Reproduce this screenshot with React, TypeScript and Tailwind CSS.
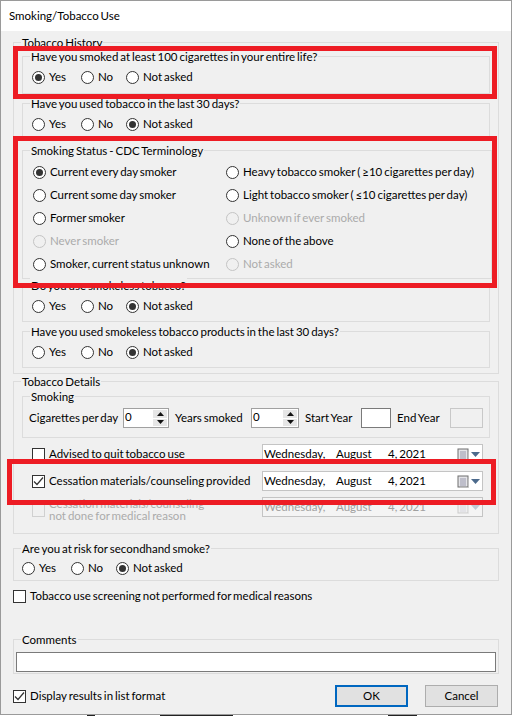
const Radio = ({ label, checked = false, disabled = false }: { label: string; checked?: boolean; disabled?: boolean }) => (
  <div className={`flex items-center gap-[4px] h-[16px] ${disabled ? "text-[#ababab]" : "text-black"}`}>
    <span className={`w-[13px] h-[13px] rounded-full border flex items-center justify-center shrink-0 ${disabled ? "border-[#c4c4c4]" : "border-[#333333] bg-white"}`}>
      {checked && <span className="w-[7px] h-[7px] rounded-full bg-[#333333]" />}
    </span>
    <span className="whitespace-nowrap">{label}</span>
  </div>
);

const Checkbox = ({ checked = false, disabled = false }: { checked?: boolean; disabled?: boolean }) => (
  <span className={`w-[13px] h-[13px] border flex items-center justify-center shrink-0 ${disabled ? "border-[#d0d0d0] bg-[#f0f0f0]" : "border-[#333333] bg-white"}`}>
    {checked && (
      <svg width="11" height="11" viewBox="0 0 11 11" fill="none" stroke="#333333" strokeWidth="1.2">
        <path d="M1 5.5 L4 8.5 L10 1.5" />
      </svg>
    )}
  </span>
);

const Group = ({ title, className, children }: { title: string; className: string; children?: React.ReactNode }) => (
  <div className={`relative border border-[#dcdcdc] ${className}`}>
    <span className="absolute -top-[8px] left-[7px] bg-[#f0f0f0] px-[1px] leading-[16px] whitespace-nowrap text-black">{title}</span>
    {children}
  </div>
);

// the Yes / No / Not asked row used by most of the questions
const YesNo = ({ title, selected, className }: { title: string; selected: string; className: string }) => (
  <Group title={title} className={`w-[468px] ${className}`}>
    <div className="flex pt-[12px] pl-[9px]">
      <div className="w-[49px]"><Radio label="Yes" checked={selected === "Yes"} /></div>
      <div className="w-[45px]"><Radio label="No" checked={selected === "No"} /></div>
      <Radio label="Not asked" checked={selected === "Not asked"} />
    </div>
  </Group>
);

const Spinner = ({ width }: { width: string }) => (
  <div className={`h-[20px] border border-[#a0a0a0] bg-white flex shrink-0 ${width}`}>
    <span className="flex-1 pl-[1px] leading-[16px]">0</span>
    <div className="w-[14px] my-[1px] mr-[1px] flex flex-col gap-[1px]">
      <div className="flex-1 bg-[#e6e6e6] flex items-center justify-center">
        <svg width="7" height="4" viewBox="0 0 7 4"><path d="M3.5 0 L7 4 H0 Z" fill="#111111" /></svg>
      </div>
      <div className="flex-1 bg-[#e6e6e6] flex items-center justify-center">
        <svg width="7" height="4" viewBox="0 0 7 4"><path d="M0 0 H7 L3.5 4 Z" fill="#111111" /></svg>
      </div>
    </div>
  </div>
);

const DatePicker = ({ disabled = false }: { disabled?: boolean }) => (
  <div className={`w-[221px] h-[20px] border border-[#c4c4c4] flex items-center pl-[1px] shrink-0 ${disabled ? "bg-[#f4f4f4] text-[#a0a0a0]" : "bg-white text-black"}`}>
    <span className="w-[72px]">Wednesday,</span>
    <span className="w-[51px]">August</span>
    <span className="w-[70px] pl-[1px]">4, 2021</span>
    <svg width="12" height="13" viewBox="0 0 12 13" className={disabled ? "opacity-30" : ""}>
      <rect x="1" y="1" width="10" height="11" fill="#e4e4e8" stroke="#6e6e6e" />
      <path d="M3 4h6M3 6h6M3 8h6M3 10h6M4 3v8M6 3v8M8 3v8" stroke="#a4a4b4" strokeWidth="0.7" />
      <path d="M12 4v9H3" stroke="#c8c8c8" fill="none" />
    </svg>
    <svg width="9" height="5" viewBox="0 0 9 5" className={`ml-[2px] ${disabled ? "opacity-30" : ""}`}>
      <path d="M0 0 H9 L4.5 5 Z" fill="#4c6a8c" />
    </svg>
  </div>
);

const RedBox = ({ className }: { className: string }) => (
  <div className={`absolute border-[5px] border-[#ed1c24] pointer-events-none ${className}`} />
);

const App = () => {
  return (
    <div
      className="relative w-[512px] h-[716px] bg-white overflow-hidden text-[11.5px] [word-spacing:-1px] text-black"
      style={{ fontFamily: 'Lato, "Noto Sans", sans-serif' }}
    >
      <div className="w-[512px] h-[715px] border border-[#9a9a9a] bg-[#f0f0f0]">
        <div className="h-[30px] bg-white pl-[8px] pt-[7px] leading-[16px]">Smoking/Tobacco Use</div>

        <div className="pl-[12px] pt-[11px]">
          {/* Tobacco History */}
          <Group title="Tobacco History" className="w-[486px] h-[332px] pl-[8px] pt-[13px]">
            <YesNo title="Have you smoked at least 100 cigarettes in your entire life?" selected="Yes" className="h-[38px]" />
            <YesNo title="Have you used tobacco in the last 30 days?" selected="Not asked" className="h-[38px] mt-[9px]" />

            <Group title="Smoking Status - CDC Terminology" className="w-[470px] h-[129px] mt-[9px]">
              <div className="grid grid-cols-[193px_1fr] auto-rows-[23px] pt-[13px] pl-[10px]">
                <Radio label="Current every day smoker" checked />
                <Radio label="Heavy tobacco smoker ( ≥10 cigarettes per day)" />
                <Radio label="Current some day smoker" />
                <Radio label="Light tobacco smoker ( ≤10 cigarettes per day)" />
                <Radio label="Former smoker" />
                <Radio label="Unknown if ever smoked" disabled />
                <Radio label="Never smoker" disabled />
                <Radio label="None of the above" />
                <Radio label="Smoker, current status unknown" />
                <Radio label="Not asked" disabled />
              </div>
            </Group>

            <YesNo title="Do you use smokeless tobacco?" selected="Not asked" className="h-[37px] mt-[6px]" />
            <YesNo title="Have you used smokeless tobacco products in the last 30 days?" selected="Not asked" className="h-[37px] mt-[9px]" />
          </Group>

          {/* Tobacco Details */}
          <Group title="Tobacco Details" className="w-[486px] h-[153px] mt-[7px] pl-[8px] pt-[14px]">
            <Group title="Smoking" className="w-[468px] h-[42px]">
              <div className="flex items-center pl-[6px] pt-[11px] whitespace-nowrap">
                <span className="w-[94px]">Cigarettes per day</span>
                <Spinner width="w-[46px]" />
                <span className="w-[76px] ml-[6px]">Years smoked</span>
                <Spinner width="w-[48px]" />
                <span className="w-[56px] ml-[6px]">Start Year</span>
                <div className="w-[30px] h-[20px] border border-[#7a7a7a] bg-white" />
                <span className="w-[53px] ml-[6px]">End Year</span>
                <div className="w-[33px] h-[20px] border border-[#c8c8c8] bg-[#f0f0f0]" />
              </div>
            </Group>

            <div className="flex flex-col gap-[7px] mt-[6px] pl-[10px] w-[461px]">
              <div className="flex items-center justify-between h-[20px]">
                <div className="flex items-center gap-[4px]"><Checkbox /><span className="whitespace-nowrap">Advised to quit tobacco use</span></div>
                <DatePicker />
              </div>
              <div className="flex items-center justify-between h-[20px]">
                <div className="flex items-center gap-[4px]"><Checkbox checked /><span className="whitespace-nowrap">Cessation materials/counseling provided</span></div>
                <DatePicker />
              </div>
              <div className="flex items-start justify-between h-[20px] -mt-[1px]">
                <div className="flex items-center gap-[4px] mt-[1px] text-[#ababab]">
                  <Checkbox disabled />
                  <span className="leading-[12px] whitespace-nowrap">Cessation materials/counseling<br />not done for medical reason</span>
                </div>
                <DatePicker disabled />
              </div>
            </div>
          </Group>

          {/* Secondhand smoke */}
          <Group title="Are you at risk for secondhand smoke?" className="w-[486px] h-[33px] mt-[14px]">
            <div className="flex pt-[11px] pl-[8px]">
              <div className="w-[49px]"><Radio label="Yes" /></div>
              <div className="w-[45px]"><Radio label="No" /></div>
              <Radio label="Not asked" checked />
            </div>
          </Group>

          <div className="flex items-center gap-[4px] h-[16px] mt-[7px]">
            <Checkbox />
            <span>Tobacco use screening not performed for medical reasons</span>
          </div>

          <Group title="Comments" className="w-[486px] h-[35px] mt-[35px] pl-[2px] pt-[12px]">
            <div className="w-[480px] h-[20px] border border-[#7a7a7a] bg-white" />
          </Group>

          <div className="flex items-center w-[485px] h-[22px] mt-[11px]">
            <Checkbox checked />
            <span className="ml-[4px] flex-1">Display results in list format</span>
            <button className="w-[73px] h-[22px] border-2 border-[#0067c0] bg-[#e1e1e1] leading-[16px]">OK</button>
            <button className="w-[73px] h-[22px] border border-[#adadad] bg-[#e1e1e1] leading-[16px] ml-[17px]">Cancel</button>
          </div>
        </div>
      </div>

      {/* bits of the window behind the dialog */}
      <div className="flex h-[1px]">
        <span className="w-[8px] ml-[87px] bg-[#222222]" />
        <span className="w-[73px] ml-[65px] bg-[#222222]" />
        <span className="w-[29px] ml-[155px] bg-[#222222]" />
      </div>

      {/* red highlight boxes drawn over the screenshot */}
      <RedBox className="left-[13px] top-[46px] w-[484px] h-[53px]" />
      <RedBox className="left-[13px] top-[136px] w-[484px] h-[152px]" />
      <RedBox className="left-[7px] top-[459px] w-[489px] h-[46px]" />
    </div>
  );
};

export default App;
